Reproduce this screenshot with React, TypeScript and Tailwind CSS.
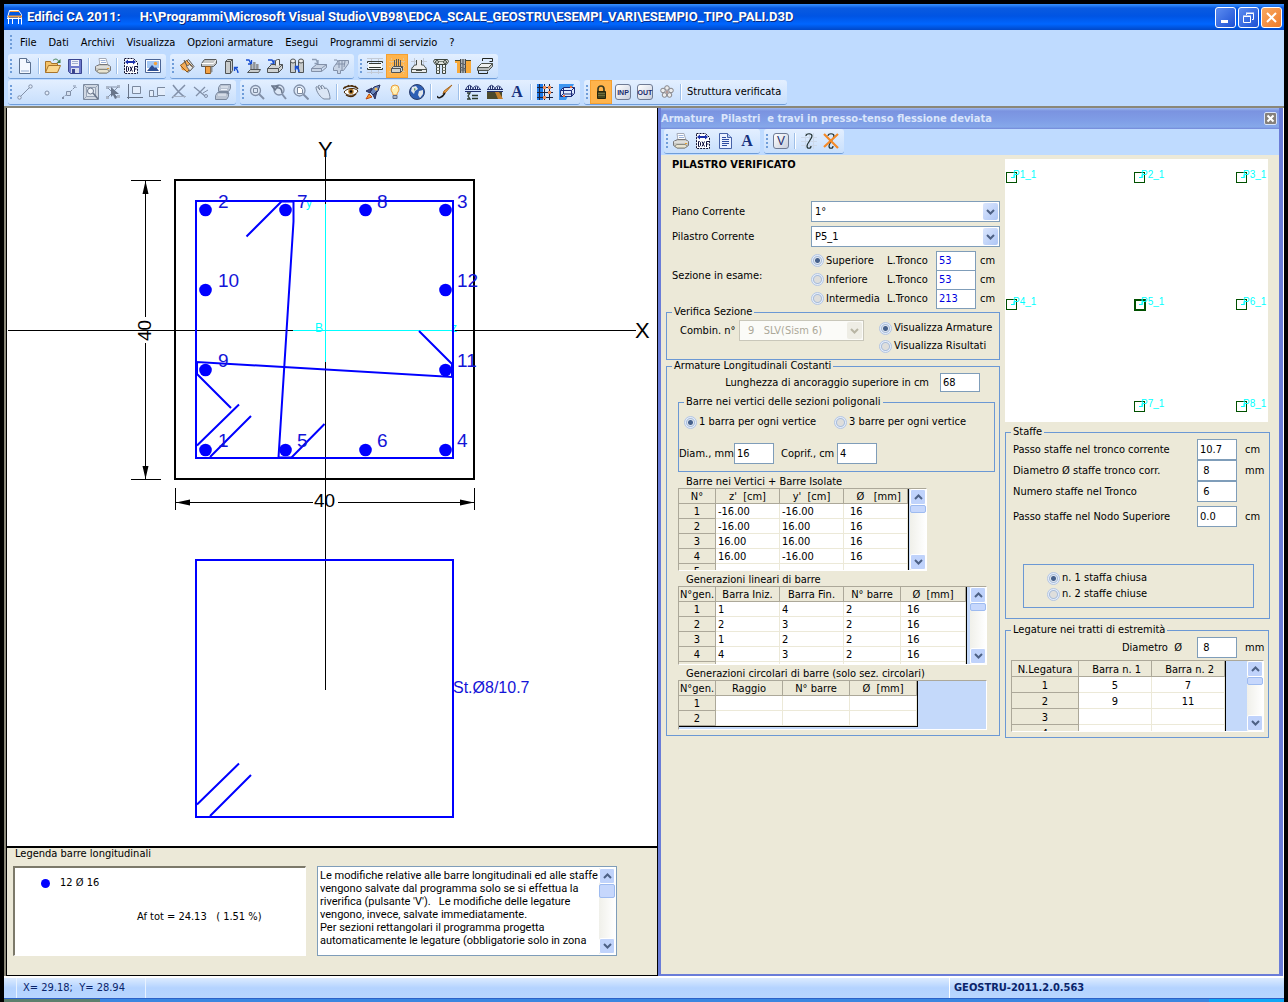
import type { ReactNode } from 'react';

const UI_FONT = "font-['DejaVu_Sans_Condensed','DejaVu_Sans',sans-serif]";

/* ---------- Icons (16x16 grid) ---------- */

const ICONS: Record<string, ReactNode> = {
  newFile: (
    <>
      <path d="M2.500.5h7l4 4v11h-11z" fill="#f4f8ff" stroke="#5b708f" />
      <path d="M9.500.5v4h4" fill="#cfdcf0" stroke="#5b708f" />
      <path d="M4 12h8v2H4z" fill="#c4d2e8" />
    </>
  ),
  open: (
    <>
      <path d="M.5 14.500v-11h5l1 2h6v3" fill="#f4c36a" stroke="#a8742a" />
      <path d="M.5 14.500l3-7h12l-3 7z" fill="#fbd88f" stroke="#a8742a" />
      <path d="M8 2.500c2-2 4-2 6 1" fill="none" stroke="#3f7f4f" />
      <path d="M15.500 1v4h-4z" fill="#3f7f4f" />
    </>
  ),
  save: (
    <>
      <path d="M1.500 1.500h13v14h-11l-2-2z" fill="#6d79cc" stroke="#3a4590" />
      <path d="M4 2h8v6H4z" fill="#eef1fa" />
      <path d="M5 3.500h6M5 5.500h6" stroke="#a0aed0" />
      <path d="M4 10h8v5H4z" fill="#d7def0" />
      <path d="M5 11h3v4H5z" fill="#3a4590" />
    </>
  ),
  print: (
    <>
      <path d="M4 .5h7l2 7h-8z" fill="#fff" stroke="#a4aab8" />
      <path d="M5.500 2.500h5M6 4.500h5" stroke="#9ab0d8" />
      <path d="M.5 8.500l4-2h8l3 2v4l-4 2.500h-7l-4-2.500z" fill="#c9c9c4" stroke="#77777a" />
      <path d="M1 9h14" stroke="#f4f4f2" />
      <path d="M3.500 11.500h9l1.500 2-2 1.500H4L2 13.500z" fill="#e9e4d0" stroke="#8a8a80" />
      <path d="M12 10h2v1h-2z" fill="#e8a030" />
    </>
  ),
  dxf: (
    <>
      <path d="M1.500.5h9l4 4v11h-13z" fill="#fff" stroke="#101030" strokeDasharray="2 1" />
      <path d="M2 4l3-2.500V3h5V1.500L13 4l-3 2.500V5H5v1.500z" fill="#1a2ea8" />
      <path
        d="M3.500 8.500v5h1l1-1v-3l-1-1zM7 8.500l2.500 5M9.500 8.500l-2.500 5M11.500 14V8.500h3M11.500 11h2"
        fill="none"
        stroke="#10103c"
      />
    </>
  ),
  image: (
    <>
      <path d="M.5 1.500h15v13H.5z" fill="#fff" stroke="#4b6596" />
      <path d="M2 3h12v7H2z" fill="#a4c8f4" />
      <circle cx="10.500" cy="5.500" r="1.700" fill="#f5a23a" />
      <path d="M2 13l5-6 3 3 1-1 3 4z" fill="#2c4f94" />
    </>
  ),
  bucket: (
    <>
      <path d="M1 6l4 4 3 3-5-1z" fill="#f29a34" />
      <path d="M4.500 5.500l5-4 5.500 7-6 6z" fill="#d9dbdc" stroke="#5c5c5c" />
      <path d="M1.500 7.500l6-5 6 6-5.500 5.500z" fill="#f4ad58" stroke="#8a5a20" />
      <path d="M7.500 8.500l3-2 3.500 3-3 3.500z" fill="#e6e6e6" stroke="#666" />
      <path d="M5 2l3 6" stroke="#4b4b4b" fill="none" />
    </>
  ),
  beamT: (
    <>
      <path d="M.5 5.500l3-4h12v4l-3 3h-12z" fill="#c4c6c6" stroke="#55585a" />
      <path d="M4.500 8.500h5v7h-5z" fill="#f3a144" stroke="#8a5418" />
      <path d="M9.500 8.500h2v5l-2 2z" fill="#8a8d90" />
      <path d="M.5 5.500h12l3-4" stroke="#fff" fill="none" />
    </>
  ),
  column: (
    <>
      <path d="M2.500 3.500l2-2h5v11l-2 3h-5z" fill="#c9cccc" stroke="#505456" />
      <path d="M7.500 15v-11.500l2-2M2.500 3.500h5" stroke="#505456" fill="none" />
      <path d="M15 15c0-3-1-4-3-5M11.500 13V9.500H15" stroke="#1a4fd0" strokeWidth="1.300" fill="none" />
    </>
  ),
  pileUp: (
    <>
      <path d="M1 2h3l2 4M3 6h3.500V2" stroke="#1a4fd0" strokeWidth="1.300" fill="none" />
      <path d="M6.500 6v6M9.500 4v8M12.500 6v6" stroke="#4a4d50" strokeWidth="2" />
      <path d="M7 6v6M10 4v8M13 6v6" stroke="#d8dada" />
      <path d="M2.500 14.500l3-3h10l-2 3z" fill="#c9cccc" stroke="#505456" />
    </>
  ),
  slabUp: (
    <>
      <path d="M1 2h4l2 4M3.500 6H7V2" stroke="#1a4fd0" strokeWidth="1.300" fill="none" />
      <path d="M.5 10.500l4-4h11v4l-4 4H.5z" fill="#d0d3d3" stroke="#505456" />
      <path d="M.5 10.500h11l4-4M11.500 10.500v4" fill="none" stroke="#505456" />
      <path d="M8.500 7.500v-5l2-1h2v6" fill="#eceeee" stroke="#505456" />
    </>
  ),
  piles: (
    <>
      <path d="M1.500 3.500h5v11h-5zM9.500 3.500h5v11h-5z" fill="#c8cbcb" stroke="#505456" />
      <ellipse cx="4" cy="3" rx="2.500" ry="2" fill="#eee" stroke="#505456" />
      <ellipse cx="12" cy="3" rx="2.500" ry="2" fill="#eee" stroke="#505456" />
      <path d="M10 14c0-3-1-4-3-5M6.500 12V8.500H10" stroke="#1a4fd0" strokeWidth="1.500" fill="none" />
    </>
  ),
  slabOff: (
    <>
      <path d="M1 1.500h4l2 4M3.500 5.500H7V2" stroke="#8c9cb4" strokeWidth="1.300" fill="none" />
      <path d="M.5 10.500l5-4h10l-5 4zM.5 10.500v3h10v-3M10.500 13.500l5-4v-3" fill="#c7d3e4" stroke="#8290a8" />
    </>
  ),
  stairOff: (
    <>
      <path d="M.5 9.500l5-7h10v3l-5 7h-3v3h-3v-3h-4z" fill="#c7d3e4" stroke="#8290a8" />
      <path d="M3 6h9M6 3v7M9 3v9M12 3l-1 6M1 2h3l1 2" stroke="#8290a8" fill="none" />
    </>
  ),
  beamGrid: (
    <>
      <path d="M0 .5h16M0 7.500h16M0 14.500h16M4.500 0v16M11.500 0v16" stroke="#c2cad6" />
      <path d="M1 5h14v6H1z" fill="#f7f9f7" />
      <path d="M.5 5v-1.500h15V5M.5 10v1.500h15V10M2 5.500h12M2 9.500h12" fill="none" stroke="#343a34" />
    </>
  ),
  pillarGrid: (
    <>
      <path d="M0 3.500h16M0 8.500h16M2.500 0v16M14.500 0v16M0 13.500h16" stroke="#e4c494" strokeDasharray="2 1" />
      <path d="M5.500 2v7M7.500 1v8M9.500 1v8M11.500 2v7" stroke="#55585a" />
      <path d="M2.500 10.500l2-2h9v4l-2 2h-9z" fill="#d0d3d3" stroke="#505456" />
      <path d="M2.500 10.500h9l2-2M11.500 10.500v4" stroke="#505456" fill="none" />
    </>
  ),
  plinth: (
    <>
      <path d="M0 3.500h16M0 9.500h16M3.500 0v13M12.500 0v13" stroke="#c2cad6" />
      <path d="M5.500 2v5h-2l-3 4v3.500h15V11l-3-4h-2V2" fill="#eceeee" stroke="#4c524c" />
      <path d="M1 11.500h14M5 12.500h6" stroke="#4c524c" />
    </>
  ),
  pilePair: (
    <>
      <path d="M1.500 1.500h13l1 2-2 3h-11l-2-3z" fill="#dfe3dd" stroke="#3c443c" />
      <path d="M3.500 7v8.500h3V7M9.500 7v8.500h3V7" fill="#f2f4f2" stroke="#3c443c" />
      <circle cx="4" cy="4" r="1.500" fill="none" stroke="#3c443c" />
      <circle cx="12" cy="4" r="1.500" fill="none" stroke="#3c443c" />
      <path d="M3.500 9.500h3M3.500 12.500h3M9.500 9.500h3M9.500 12.500h3M6 3.500h4" stroke="#7b847b" />
    </>
  ),
  pileSoil: (
    <>
      <path d="M0 2h5v13H2V5H0zM11 3h5v12h-5z" fill="#f8a938" />
      <path d="M0 2.500h16" stroke="#4c4a2c" />
      <path d="M5 1h6v14H5z" fill="#aeb3b6" />
      <path d="M5.500 1v14M8 1v14M10.500 1v14" stroke="#44484a" />
      <path d="M5 5l6 2M5 9l6 2M5 12h6" stroke="#5b6064" />
    </>
  ),
  stirrups: (
    <>
      <path d="M5.500 3V.500h10v3h-3M1.500 12.500v3h9v-2" fill="none" stroke="#222622" />
      <path d="M.5 9.500l4-4h11l-4 4z" fill="#eef0f0" stroke="#4c524c" />
      <path d="M.5 9.500v3h11l4-4v-3l-4 4z" fill="#b8bcbc" stroke="#4c524c" />
    </>
  ),
  segment: (
    <>
      <path d="M3 13L13 3" stroke="#8290a8" />
      <circle cx="2.500" cy="13.500" r="1.700" fill="#e3edfb" stroke="#8290a8" />
      <circle cx="13.500" cy="2.500" r="1.700" fill="#e3edfb" stroke="#8290a8" />
    </>
  ),
  node: <circle cx="8" cy="9" r="2" fill="#e3edfb" stroke="#8290a8" />,
  polyNode: (
    <>
      <path d="M1 14l4-3M9 8l5-5M12 2h3v2" stroke="#8290a8" strokeDasharray="3 1" fill="none" />
      <path d="M5.500 7.500h4v4h-4z" fill="#d3dfef" stroke="#8290a8" />
      <path d="M1 13h2v2H1z" fill="#8290a8" />
    </>
  ),
  frameZoom: (
    <>
      <path d="M.5.5h15v15H.5z" fill="#cfd7e2" stroke="#7b899e" />
      <path d="M1 1l14 14M15 1L1 15" stroke="#98a4b6" />
      <path d="M3.500 3.500h9v9h-9z" fill="#dfe6ee" stroke="#98a4b6" />
      <circle cx="7.500" cy="7" r="3" fill="#eef3fa" stroke="#68758a" />
      <path d="M10 9l5 6" stroke="#68758a" strokeWidth="1.500" />
    </>
  ),
  pick: (
    <>
      <path d="M1 2h3v3H1zM12 1h3v3h-3zM1 12h3v3H1zM12 11h3v3h-3z" fill="#aab6c8" />
      <path d="M3 4l9 9M13 3L3 13M4 3h8" stroke="#8290a8" />
      <path d="M6 3v10l2-2 2 4 2-1-2-4h4z" fill="#68758a" />
    </>
  ),
  dimBox: (
    <>
      <path d="M1.500 0v15M0 13.500h16" stroke="#68758a" />
      <path d="M5.500 2.500h8v7h-8z" fill="#e3edfb" stroke="#7b899e" />
    </>
  ),
  dimSide: (
    <>
      <path d="M.5 12.500v-6h4v6zM16 3.500H8.500v8H16" fill="#e3edfb" stroke="#7b899e" />
      <path d="M0 12.500h9" stroke="#7b899e" />
    </>
  ),
  cutA: (
    <>
      <path d="M2 1c3 4 8 10 12 12M14 1C10 5 5 10 1 14" stroke="#8290a8" strokeWidth="1.500" fill="none" />
      <path d="M2 12.500h13" stroke="#a5b1c4" />
    </>
  ),
  cutB: (
    <>
      <path d="M1 3l11 9M12 3L3 12" stroke="#8290a8" strokeWidth="1.300" />
      <circle cx="13" cy="12" r="1.500" fill="none" stroke="#8290a8" />
      <path d="M10 9l5-3" stroke="#8290a8" />
    </>
  ),
  layersOff: (
    <>
      <path d="M3.500 3.500l2-3h10v4l-2 3h-10zM.5 11.500l2-3h11v4l-2 3H.5z" fill="#b9c3d2" stroke="#7b899e" />
      <path d="M6 3h7M6 5.500h6M3 11h8" stroke="#eef3fa" />
      <path d="M11 8l3 2" stroke="#7b899e" strokeWidth="2" />
    </>
  ),
  zoomWin: (
    <>
      <circle cx="6.500" cy="6.500" r="5" fill="#dbe6f5" stroke="#8290a8" strokeWidth="1.300" />
      <path d="M4.500 4.500h4v4h-4z" fill="none" stroke="#7b899e" />
      <path d="M10 10l5 5" stroke="#8290a8" strokeWidth="2" />
    </>
  ),
  zoomBack: (
    <>
      <circle cx="8" cy="6" r="5" fill="#dbe6f5" stroke="#8290a8" strokeWidth="1.300" />
      <path d="M1 2h6L4 6zM5 4c4-1 6 1 6 5" fill="none" stroke="#68758a" strokeWidth="1.500" />
      <path d="M11 10l4 5" stroke="#8290a8" strokeWidth="2" />
    </>
  ),
  zoomPage: (
    <>
      <circle cx="6.500" cy="6.500" r="5.500" fill="#dbe6f5" stroke="#8290a8" strokeWidth="1.300" />
      <path d="M4.500 3.500h3l2 2v4h-5z" fill="#fff" stroke="#7b899e" />
      <path d="M10.500 10.500l5 5" stroke="#8290a8" strokeWidth="2" />
    </>
  ),
  hand: (
    <path
      d="M1 3c1-1 2 0 3 2l1 1-2-4c1-1 2-1 3 1l1 2-1-3c1-1 2-1 3 1l1 2c0-2 2-1 3 1 1 3 2 5 2 9H9C6 14 1 8 1 3z"
      fill="#dbe6f5"
      stroke="#7b899e"
    />
  ),
  eye: (
    <>
      <path d="M1 8c3-4 11-5 14-1-2 5-11 6-14 1z" fill="#fff" stroke="#4a2a08" />
      <circle cx="8" cy="7.500" r="2.700" fill="#b07828" />
      <circle cx="8" cy="7.500" r="1.300" fill="#000" />
      <path d="M0 5c3-4 12-4 15 0M1 3l2 1M5 1l1 2M9 1v1M13 2l-1 1M3 11c3 2 7 2 10-1" stroke="#4a2a08" fill="none" strokeWidth="1.300" />
    </>
  ),
  rocket: (
    <>
      <path d="M15 1L9 3 5 8l3 3 5-4z" fill="#6a86bc" stroke="#28305c" />
      <path d="M1 7l6-3-2 5zM10 15l-2-4 4-4z" fill="#3c4a80" stroke="#28305c" />
      <path d="M1 15l3-5 3 3z" fill="#f8a030" stroke="#c04a10" />
      <circle cx="11" cy="5" r="1.500" fill="#f5c05a" />
    </>
  ),
  bulb: (
    <>
      <path d="M4 5a4 4 0 0 1 8 0c0 3-2 3-2 6H6c0-3-2-3-2-6z" fill="#fff0b4" stroke="#e89c3c" />
      <path d="M6 11.500h4v3H6z" fill="#a7b3c8" stroke="#5b6a88" />
      <path d="M6 5l2-2" stroke="#fff" />
    </>
  ),
  globe: (
    <>
      <circle cx="8" cy="8" r="7.500" fill="#2e5fb4" stroke="#2b3d6c" />
      <path d="M3 3l4-1 2 3-3 2-1 3-3-3zM10 7l4-1v4l-3 4-2-3z" fill="#e2e6ea" />
      <path d="M5 4l2 1-2 2z" fill="#5f9e6a" />
    </>
  ),
  brush: (
    <>
      <path d="M15 1L8 9l-2 1 1-3z" fill="#f2a54a" stroke="#a8661c" />
      <path d="M0 12c1 3 5 2 8-3" stroke="#1c1c1c" strokeWidth="1.500" fill="none" />
    </>
  ),
  bridgeList: (
    <>
      <path d="M0 5.500h16M1 5c2-5 5-5 7 0 1-4 5-4 7 0M3.500 2v3M5.500 2v3M10.500 3v2M12.500 3v2" stroke="#22306c" fill="none" />
      <path d="M2 9h3l-2 3 2 3H2M7 11.500h6M7 14.500h6" stroke="#2c3a2c" fill="none" strokeWidth="1.300" />
      <path d="M0 7.500h16" stroke="#22306c" />
    </>
  ),
  bridgeSoil: (
    <>
      <path d="M0 5.500h16M1 5c2-5 5-5 7 0 1-4 5-4 7 0M3.500 2v3M5.500 2v3M10.500 3v2M12.500 3v2" stroke="#22306c" fill="none" />
      <path d="M0 8h15v7H0z" fill="#4c4a2c" />
      <path d="M8 8h4l4 7h-5z" fill="#c5802c" />
      <path d="M0 7.500h16" stroke="#22306c" />
    </>
  ),
  plan: (
    <>
      <path d="M0 0h6v16H0z" fill="#1d7ae8" />
      <path d="M0 3.500h16M0 8.500h16M0 13.500h16M2.500 0v16M7.500 0v16M12.500 0v16" stroke="#1c2440" />
      <path d="M6 2h3v3H6zM11 2h3v3h-3zM6 12h3v3H6zM11 7h3v3h-3z" fill="#f0905a" />
    </>
  ),
  box3d: (
    <>
      <path d="M0 0h15l-8 16H0z" fill="#3d96f0" />
      <path d="M1.500 6.500l3-3h11v6l-3 3h-11zM1.500 6.500h11v6M12.500 6.500l3-3" fill="#dfeaff" stroke="#1c2c78" />
      <path d="M4.500 4v6h10M4.500 9.500l-3 3" fill="none" stroke="#1c2c78" />
      <path d="M11 2h2v2h-2zM4 11h2v2H4z" fill="#f0703a" />
    </>
  ),
  lock: (
    <>
      <path d="M5 8V5a3 3 0 0 1 6 0v3" fill="none" stroke="#3a3a20" strokeWidth="1.700" />
      <path d="M4.500 7.500h8v7h-8z" fill="#44441e" stroke="#24240c" />
      <path d="M5 9.500h7M5 11.500h7" stroke="#6c6c3a" />
    </>
  ),
  flower: (
    <>
      <g fill="#ececec" stroke="#85858a">
        <circle cx="8" cy="4" r="2.300" />
        <circle cx="12" cy="6.500" r="2.300" />
        <circle cx="4" cy="6.500" r="2.300" />
        <circle cx="10.500" cy="11" r="2.300" />
        <circle cx="5.500" cy="11" r="2.300" />
      </g>
      <circle cx="8" cy="8" r="1.500" fill="#b49a94" />
    </>
  ),
  doc: (
    <>
      <path d="M2.500.5h8l4 4v11h-12z" fill="#eaf1ff" stroke="#4662a8" />
      <path d="M5 4.500h4M5 6.500h7M5 8.500h7M5 10.500h7M5 12.500h5" stroke="#2c4ba0" />
      <path d="M10.500.5v4h4" fill="#b9cdf2" stroke="#4662a8" />
    </>
  ),
  hook: (
    <>
      <path d="M0 4.500h16M0 8.500h16M0 12.500h16M4.500 0v16M8.500 0v16M12.500 0v16" stroke="#cdd9ea" />
      <path d="M5 3c0-3 6-3 6 0s-5 7-5 10c0 3 4 3 4 0" fill="none" stroke="#203030" strokeWidth="1.200" />
    </>
  ),
  hookDelete: (
    <>
      <path d="M5 3c0-3 6-3 6 0s-5 7-5 10c0 3 4 3 4 0" fill="none" stroke="#203030" strokeWidth="1.200" />
      <path d="M1 1l14 14M15 1L1 14" stroke="#f58a28" strokeWidth="2.200" />
    </>
  ),
};

function Icon({ name }: { name: string }) {
  return (
    <svg viewBox="0 0 16 16" className="w-4 h-4" aria-hidden="true">
      {ICONS[name]}
    </svg>
  );
}

function Chip({ children }: { children: string }) {
  return (
    <span
      className={`flex w-4 h-4 items-center justify-center rounded-[3px] border border-[#6f7b94] bg-gradient-to-br from-white to-[#c9cfdd] leading-none text-[#1a2a6c] font-['Liberation_Sans',sans-serif] ${
        children.length > 1 ? 'text-[7px] font-bold' : 'text-xs'
      }`}
    >
      {children}
    </span>
  );
}

/* ---------- Toolbars ---------- */

type Tool = { name: string; label: string; active?: boolean } | '|';

const FILE_TOOLS: Tool[] = [
  { name: 'newFile', label: 'Nuovo' }, '|',
  { name: 'open', label: 'Apri' },
  { name: 'save', label: 'Salva' }, '|',
  { name: 'print', label: 'Stampa' }, '|',
  { name: 'dxf', label: 'DXF' },
  { name: 'image', label: 'Immagine' },
];

const MODEL_TOOLS: Tool[] = [
  { name: 'bucket', label: 'Materiali' },
  { name: 'beamT', label: 'Travi' },
  { name: 'column', label: 'Pilastri' },
  { name: 'pileUp', label: 'Pali' },
  { name: 'slabUp', label: 'Plinti' },
  { name: 'piles', label: 'Pali di fondazione' },
  { name: 'slabOff', label: 'Piastre' },
  { name: 'stairOff', label: 'Scale' },
];

const REBAR_TOOLS: Tool[] = [
  { name: 'beamGrid', label: 'Armature travi' },
  { name: 'pillarGrid', label: 'Armature pilastri', active: true },
  { name: 'plinth', label: 'Armature plinti' },
  { name: 'pilePair', label: 'Plinti su pali' },
  { name: 'pileSoil', label: 'Armature pali' },
  { name: 'stirrups', label: 'Staffe' },
];

const EDIT_TOOLS: Tool[] = [
  { name: 'segment', label: 'Segmento' },
  { name: 'node', label: 'Nodo' },
  { name: 'polyNode', label: 'Dividi' },
  { name: 'frameZoom', label: 'Cerca' },
  { name: 'pick', label: 'Seleziona' },
  { name: 'dimBox', label: 'Filo fisso' },
  { name: 'dimSide', label: 'Allinea' },
  { name: 'cutA', label: 'Taglia' },
  { name: 'cutB', label: 'Elimina' },
  { name: 'layersOff', label: 'Copia piano' },
];

const VIEW_TOOLS: Tool[] = [
  { name: 'zoomWin', label: 'Zoom finestra' },
  { name: 'zoomBack', label: 'Zoom precedente' },
  { name: 'zoomPage', label: 'Zoom tutto' },
  { name: 'hand', label: 'Sposta' }, '|',
  { name: 'eye', label: 'Vista' },
  { name: 'rocket', label: 'Calcola' },
  { name: 'bulb', label: 'Suggerimenti' },
  { name: 'globe', label: 'Internet' }, '|',
  { name: 'brush', label: 'Colori' }, '|',
  { name: 'bridgeList', label: 'Carichi' },
  { name: 'bridgeSoil', label: 'Terreno' },
  { name: 'letter', label: 'Carattere' }, '|',
  { name: 'plan', label: 'Pianta' },
  { name: 'box3d', label: 'Vista 3D' },
];

const STATE_TOOLS: Tool[] = [
  { name: 'lock', label: 'Blocca', active: true },
  { name: 'INP', label: 'Input' },
  { name: 'OUT', label: 'Output' },
  { name: 'flower', label: 'Opzioni' }, '|',
];

const PANEL_TOOLS: Tool[] = [
  { name: 'print', label: 'Stampa sezione' },
  { name: 'dxf', label: 'Esporta DXF' },
  { name: 'doc', label: 'Relazione' },
  { name: 'letter', label: 'Carattere disegno' },
];

const CHECK_TOOLS: Tool[] = [
  { name: 'V', label: 'Riverifica' }, '|',
  { name: 'hook', label: 'Aggiungi legatura' },
  { name: 'hookDelete', label: 'Elimina legatura' },
];

function Grip() {
  return (
    <span className="flex w-1.5 flex-col items-center gap-0.5" aria-hidden="true">
      {[0, 1, 2, 3].map((i) => (
        <span key={i} className="h-0.5 w-0.5 bg-[#6f9dd9]" />
      ))}
    </span>
  );
}

function ToolGlyph({ name }: { name: string }) {
  if (name === 'letter') {
    return <span className="text-base leading-4 font-bold text-[#16307c] font-['Liberation_Serif',serif]">A</span>;
  }
  if (name === 'V' || name === 'INP' || name === 'OUT') {
    return <Chip>{name}</Chip>;
  }
  return <Icon name={name} />;
}

function Band({ tools, children }: { tools: Tool[]; children?: ReactNode }) {
  return (
    <div className="flex items-center rounded-[3px] border-b border-[#6f9dd9] bg-gradient-to-b from-[#e3efff] to-[#c8dffc] pr-0.5">
      <Grip />
      {tools.map((t, i) =>
        t === '|' ? (
          <span key={i} className="mx-0.5 h-4 w-0.5 border-l border-[#9ebfe8] bg-white" />
        ) : (
          <button
            key={i}
            type="button"
            aria-label={t.label}
            className={`flex h-6 w-[22px] items-center justify-center ${
              t.active ? 'border border-[#f5a030] bg-[#ffb44c]' : ''
            }`}
          >
            <ToolGlyph name={t.name} />
          </button>
        ),
      )}
      {children}
    </div>
  );
}

/* ---------- Controls ---------- */

function Chevron({ up, muted }: { up?: boolean; muted?: boolean }) {
  return (
    <svg viewBox="0 0 9 6" className="h-1.5 w-[9px]" aria-hidden="true">
      <path
        d={up ? 'M1 5l3.500-3.500L8 5' : 'M1 1l3.500 3.500L8 1'}
        fill="none"
        stroke={muted ? '#b8b5a4' : '#4d6185'}
        strokeWidth="2"
      />
    </svg>
  );
}

function Radio({ name, label, checked }: { name: string; label: string; checked?: boolean }) {
  return (
    <label className="flex items-center gap-0.5 whitespace-nowrap">
      <input
        type="radio"
        name={name}
        defaultChecked={checked}
        className="h-[13px] w-[13px] shrink-0 appearance-none rounded-full border border-[#b4c6e4] bg-[radial-gradient(circle,#dededc_0_3px,#a9bcd8_4px,#e4edfa_5px)] checked:bg-[radial-gradient(circle,#46618c_0_2px,#e0e6ee_3px,#a9bcd8_4px,#e4edfa_5px)]"
      />
      {label}
    </label>
  );
}

function Select({ id, value, disabled }: { id: string; value: string; disabled?: boolean }) {
  return (
    <div className="relative flex-1">
      <select
        id={id}
        disabled={disabled}
        className={`h-[21px] w-full appearance-none border opacity-100 ${
          disabled ? 'border-[#c9c7ba] bg-[#fbfbf8] pl-2 text-[#aca899]' : 'border-[#7f9db9] bg-white pl-[3px] text-black'
        }`}
      >
        <option>{value}</option>
      </select>
      <span
        className={`pointer-events-none absolute top-0.5 right-0.5 flex h-[17px] w-[15px] items-center justify-center rounded-[2px] ${
          disabled ? 'bg-[#eeede5]' : 'bg-gradient-to-br from-[#dbe6fd] to-[#aec6f5]'
        }`}
      >
        <Chevron muted={disabled} />
      </span>
    </div>
  );
}

function Field({ id, value, className = '' }: { id: string; value: string; className?: string }) {
  return (
    <input
      id={id}
      defaultValue={value}
      className={`w-10 shrink-0 border border-[#7f9db9] bg-white pl-0.5 ${className}`}
    />
  );
}

function Group({ title, className = '', children }: { title: string; className?: string; children: ReactNode }) {
  return (
    <fieldset className={`min-w-0 border border-[#6b98d4] ${className}`}>
      <legend className="ml-[5px] h-2 px-0.5 leading-2">{title}</legend>
      {children}
    </fieldset>
  );
}

function ScrollBar({ thumb = 'h-2' }: { thumb?: string }) {
  return (
    <div className="flex w-4 shrink-0 flex-col bg-gradient-to-r from-[#f0f0ea] to-white" aria-hidden="true">
      <span className="flex h-4 shrink-0 items-center justify-center rounded-[2px] border border-white bg-[#c0d3fb]">
        <Chevron up />
      </span>
      <span className={`shrink-0 rounded-[2px] border border-[#9ebbf0] bg-[#c6d7fc] ${thumb}`} />
      <span className="flex-1" />
      <span className="flex h-4 shrink-0 items-center justify-center rounded-[2px] border border-white bg-[#c0d3fb]">
        <Chevron />
      </span>
    </div>
  );
}

type GridProps = {
  label: string;
  head: string[];
  rows: string[][];
  cols: number[];
  className: string;
  rowClass?: string;
  cellClass?: string;
  scroll?: boolean;
  closed?: boolean;
};

function DataGrid({ label, head, rows, cols, className, rowClass = 'h-[15px]', cellClass = 'pl-0.5', scroll, closed }: GridProps) {
  const width = cols.reduce((a, b) => a + b, 0);
  const headCell = 'border-r border-b border-[#aca899] bg-[#ece9d8] p-0 pt-px font-normal';
  return (
    <div className={`flex justify-between overflow-hidden border border-t-[#aca899] border-l-[#aca899] border-r-white border-b-white bg-[#c4d9fa] ${className}`}>
      <div className={closed ? 'self-start border-r border-b border-black' : 'border-r border-black'}>
        <table aria-label={label} className="table-fixed border-separate border-spacing-0 bg-white leading-[13px]" style={{ width }}>
          <colgroup>
            {cols.map((w, i) => (
              <col key={i} style={{ width: w }} />
            ))}
          </colgroup>
          <thead>
            <tr className={rowClass}>
              {head.map((h) => (
                <th key={h} scope="col" className={headCell}>
                  <div className="flex justify-center overflow-hidden whitespace-pre">{h}</div>
                </th>
              ))}
            </tr>
          </thead>
          <tbody>
            {rows.map((r) => (
              <tr key={r[0]} className={rowClass}>
                <th scope="row" className={headCell}>{r[0]}</th>
                {r.slice(1).map((c, j) => (
                  <td key={j} className={`border-r border-b border-[#ece9d8] p-0 pt-px ${cellClass}`}>{c}</td>
                ))}
              </tr>
            ))}
          </tbody>
        </table>
      </div>
      {scroll && <ScrollBar />}
    </div>
  );
}

/* ---------- Section drawing ---------- */

const BARS = [
  { n: 1, x: 205, y: 450, tx: 218, ty: 447 },
  { n: 2, x: 205, y: 210, tx: 218, ty: 208 },
  { n: 3, x: 445, y: 210, tx: 457, ty: 208 },
  { n: 4, x: 445, y: 450, tx: 457, ty: 447 },
  { n: 5, x: 285, y: 450, tx: 297, ty: 447 },
  { n: 6, x: 365, y: 450, tx: 377, ty: 447 },
  { n: 7, x: 285, y: 210, tx: 297, ty: 208 },
  { n: 8, x: 365, y: 210, tx: 377, ty: 208 },
  { n: 9, x: 205, y: 370, tx: 218, ty: 367 },
  { n: 10, x: 205, y: 290, tx: 218, ty: 287 },
  { n: 11, x: 445, y: 370, tx: 457, ty: 367 },
  { n: 12, x: 445, y: 290, tx: 457, ty: 287 },
];

function SectionDrawing() {
  return (
    <svg
      viewBox="7 108 650 738"
      role="img"
      aria-label="Sezione pilastro"
      className="block w-full bg-white font-['Liberation_Sans',sans-serif]"
    >
      {/* axes */}
      <g stroke="#000" shapeRendering="crispEdges">
        <path d="M8 330.500h285M455 330.500h181M325.500 157v47M325.500 362v328" />
        <path d="M131 180.500h30M131 479.500h30M145.500 181v136M145.500 343v136" />
        <path d="M175.500 488v22M474.500 488v22M176 502.500h137M338 502.500h136" />
        <path d="M175 180h299v299H175z" fill="none" strokeWidth="2" />
      </g>
      <path d="M145.500 181l3 13h-6zM145.500 479l3-13h-6zM176 502.500l14-3v6zM474 502.500l-14-3v6z" />

      {/* local reference */}
      <path d="M293 330.500h162M325.500 204v158" stroke="#0ff" shapeRendering="crispEdges" />
      <g fill="#0ff" fontSize="12">
        <text x="306" y="207">y</text>
        <text x="315" y="332">B</text>
        <text x="451" y="332">z</text>
      </g>

      {/* stirrups and ties */}
      <g stroke="#00f" strokeWidth="2" fill="none">
        <path d="M196 201h257v257H196z" shapeRendering="crispEdges" />
        <path d="M246.500 236.500l35-35h12v20l-15 236h13l33-33.500" />
        <path d="M231 408l-34-34v-12l255 15v-13l-33-33" />
        <path d="M197 445.500l42-41M210 457l41-41" />
        <path d="M196 560h257v257H196z" shapeRendering="crispEdges" />
        <path d="M197 804.500l42-41M210 816l41-41" />
      </g>

      <g fill="#00f">
        {BARS.map((b) => (
          <circle key={b.n} cx={b.x + 0.5} cy={b.y} r="6.300" />
        ))}
      </g>
      <g fill="#1414d8" fontSize="19">
        {BARS.map((b) => (
          <text key={b.n} x={b.tx} y={b.ty}>{b.n}</text>
        ))}
      </g>
      <text x="453" y="693" fill="#1414d8" fontSize="16">St.Ø8/10.7</text>

      <g fontSize="22">
        <text x="318" y="157">Y</text>
        <text x="635" y="338">X</text>
      </g>
      <g fontSize="19">
        <text x="314" y="507">40</text>
        <text x="151" y="341" transform="rotate(-90 151 341)">40</text>
      </g>
    </svg>
  );
}

const PILLARS = [
  { id: 'P1_1', x: 6, y: 13 },
  { id: 'P2_1', x: 134, y: 13 },
  { id: 'P3_1', x: 236, y: 13 },
  { id: 'P4_1', x: 6, y: 140 },
  { id: 'P5_1', x: 134, y: 140, current: true },
  { id: 'P6_1', x: 236, y: 140 },
  { id: 'P7_1', x: 134, y: 242 },
  { id: 'P8_1', x: 236, y: 242 },
];

function PillarMap() {
  return (
    <svg
      viewBox="0 0 263 263"
      role="img"
      aria-label="Pianta pilastri"
      className="block w-[263px] bg-white font-['Liberation_Sans',sans-serif]"
    >
      {PILLARS.map((p) => (
        <g key={p.id}>
          <rect
            x={p.x - 4.5}
            y={p.y + 0.5}
            width="10"
            height="10"
            fill="none"
            stroke="#005000"
            strokeWidth={p.current ? 2 : 1}
            shapeRendering="crispEdges"
          />
          <path d={`M${p.x} ${p.y + 5.500}h3v-3`} stroke="#0ff" fill="none" />
          <text x={p.x + 2} y={p.y + 6} fontSize="10" fill="#0ff">{p.id}</text>
        </g>
      ))}
    </svg>
  );
}

/* ---------- Panels ---------- */

const NOTE = [
  'Le modifiche relative alle barre longitudinali ed alle staffe',
  'vengono salvate dal programma solo se si effettua la',
  "riverifica (pulsante 'V').   Le modifiche delle legature",
  'vengono, invece, salvate immediatamente.',
  'Per sezioni rettangolari il programma progetta',
  'automaticamente le legature (obbligatorie solo in zona',
].join('\n');

const SEGMENTS = [
  { id: 'sup', label: 'Superiore', value: '53', checked: true },
  { id: 'inf', label: 'Inferiore', value: '53' },
  { id: 'int', label: 'Intermedia', value: '213' },
];

const STIRRUPS = [
  { id: 'passo', label: 'Passo staffe nel tronco corrente', value: '10.7', unit: 'cm' },
  { id: 'diametro', label: 'Diametro Ø staffe tronco corr.', value: ' 8', unit: 'mm' },
  { id: 'numero', label: 'Numero staffe nel Tronco', value: ' 6', unit: '' },
];

function StirrupRow({ id, label, value, unit }: { id: string; label: string; value: string; unit: string }) {
  return (
    <div className="flex items-center pl-[7px]">
      <label htmlFor={id} className="flex-1 whitespace-nowrap">{label}</label>
      <Field id={id} value={value} className="h-[21px]" />
      <span className="w-8 pl-2">{unit}</span>
    </div>
  );
}

function BarsColumn() {
  return (
    <div className="min-w-0 flex-1">
      <h2 className="pl-1.5 leading-5 font-bold">PILASTRO VERIFICATO</h2>

      <div className="mt-[26px] space-y-1">
        <div className="flex items-center pl-1.5">
          <label htmlFor="piano" className="w-[139px]">Piano Corrente</label>
          <Select id="piano" value="1°" />
        </div>
        <div className="flex items-center pl-1.5">
          <label htmlFor="pilastro" className="w-[139px]">Pilastro Corrente</label>
          <Select id="pilastro" value="P5_1" />
        </div>
        <div className="flex pl-1.5">
          <span className="w-[139px] pt-[18px]">Sezione in esame:</span>
          <div>
            {SEGMENTS.map((s) => (
              <div key={s.id} className="flex h-[19px] items-center">
                <div className="w-[76px]">
                  <Radio name="sezione" label={s.label} checked={s.checked} />
                </div>
                <label htmlFor={s.id} className="w-[49px]">L.Tronco</label>
                <Field id={s.id} value={s.value} className="h-5 text-[#0000e0]" />
                <span className="pl-1">cm</span>
              </div>
            ))}
          </div>
        </div>
      </div>

      <Group title="Verifica Sezione" className="h-[52px]">
        <div className="flex pt-1 pl-[13px]">
          <label htmlFor="combin" className="w-[59px] pt-1">Combin. n°</label>
          <div className="flex w-[125px]">
            <Select id="combin" value={'9\u00a0\u00a0\u00a0SLV(Sism 6)'} disabled />
          </div>
          <div className="space-y-1 pt-px pl-[15px]">
            <Radio name="vista" label="Visualizza Armature" checked />
            <Radio name="vista" label="Visualizza Risultati" />
          </div>
        </div>
      </Group>

      <Group title="Armature Longitudinali Costanti" className="mt-0.5">
        <div className="pr-1 pb-[5px] pl-[11px]">
          <div className="flex items-center justify-end gap-[11px] pt-[3px] pr-[15px]">
            <label htmlFor="ancoraggio">Lunghezza di ancoraggio superiore in cm</label>
            <Field id="ancoraggio" value="68" className="h-[19px]" />
          </div>

          <Group title="Barre nei vertici delle sezioni poligonali" className="mt-1.5 pb-[7px]">
            <div className="flex pt-[9px] pl-[5px]">
              <div className="w-[150px]">
                <Radio name="vertice" label="1 barra per ogni vertice" checked />
              </div>
              <Radio name="vertice" label="3 barre per ogni vertice" />
            </div>
            <div className="mt-3.5 flex items-center">
              <label htmlFor="diam" className="w-[55px] whitespace-nowrap">Diam., mm</label>
              <Field id="diam" value="16" className="h-[21px]" />
              <label htmlFor="coprif" className="w-[63px] pl-[7px] whitespace-nowrap">Coprif., cm</label>
              <Field id="coprif" value="4" className="h-[21px]" />
            </div>
          </Group>

          <div className="mt-1 pl-2 leading-3">Barre nei Vertici + Barre Isolate</div>
          <DataGrid
            label="Barre nei Vertici + Barre Isolate"
            className="h-[83px] w-[249px]"
            cols={[37, 64, 64, 64]}
            head={['N°', "z'  [cm]", "y'  [cm]", '  Ø   [mm]']}
            rows={[
              ['1', '-16.00', '-16.00', '16'],
              ['2', '-16.00', '16.00', '16'],
              ['3', '16.00', '16.00', '16'],
              ['4', '16.00', '-16.00', '16'],
              ['5', '', '', ''],
            ]}
            cellClass="pl-0.5 last:pl-1.5"
            scroll
          />
          <div className="mt-[3px] pl-2 leading-3">Generazioni lineari di barre</div>
          <DataGrid
            label="Generazioni lineari di barre"
            className="mr-2 h-[79px]"
            cols={[37, 64, 64, 57, 65]}
            head={['N°gen.', 'Barra Iniz.', 'Barra Fin.', 'N° barre', 'Ø  [mm]']}
            rows={[
              ['1', '1', '4', '2', '16'],
              ['2', '2', '3', '2', '16'],
              ['3', '1', '2', '2', '16'],
              ['4', '4', '3', '2', '16'],
              ['', '', '', '', ''],
            ]}
            cellClass="pl-0.5 last:pl-1.5"
            scroll
          />
          <div className="mt-[3px] pl-2 leading-3">Generazioni circolari di barre (solo sez. circolari)</div>
          <DataGrid
            label="Generazioni circolari di barre"
            className="mr-2 h-[50px]"
            cols={[37, 67, 67, 67]}
            head={['N°gen.', 'Raggio', 'N° barre', 'Ø  [mm]']}
            rows={[
              ['1', '', '', ''],
              ['2', '', '', ''],
            ]}
            closed
          />
        </div>
      </Group>
    </div>
  );
}

function StirrupsColumn() {
  return (
    <div className="w-[265px] shrink-0 pt-1">
      <PillarMap />

      <Group title="Staffe" className="mt-1.5 pb-2.5">
        <div className="pt-[3px]">
          {STIRRUPS.map((s) => (
            <StirrupRow key={s.id} {...s} />
          ))}
        </div>
        <div className="mt-1">
          <StirrupRow id="passoNodo" label="Passo staffe nel Nodo Superiore" value="0.0" unit="cm" />
        </div>
        <div className="mr-[15px] ml-[17px] mt-[37px] space-y-0.5 border border-[#6b98d4] py-1.5 pl-[23px]">
          <Radio name="staffe" label="n. 1 staffa chiusa" checked />
          <Radio name="staffe" label="n. 2 staffe chiuse" />
        </div>
      </Group>

      <Group title="Legature nei tratti di estremità" className="mt-[7px] mr-px pb-[5px]">
        <div className="flex items-center pt-[3px]">
          <label htmlFor="legDiam" className="flex-1 pr-[15px] text-right whitespace-pre">Diametro  Ø</label>
          <Field id="legDiam" value=" 8" className="h-[21px]" />
          <span className="w-[31px] pl-2">mm</span>
        </div>
        <DataGrid
          label="Legature"
          className="mt-0.5 mr-1 ml-[5px] h-[72px]"
          cols={[67, 73, 73]}
          head={['N.Legatura', ' Barra n. 1', ' Barra n. 2']}
          rows={[
            ['1', '5', '7'],
            ['2', '9', '11'],
            ['3', '', ''],
            ['4', '', ''],
          ]}
          rowClass="h-4"
          cellClass="text-center"
          scroll
        />
      </Group>
    </div>
  );
}

const MENU = ['File', 'Dati', 'Archivi', 'Visualizza', 'Opzioni armature', 'Esegui', 'Programmi di servizio', '?'];

function TitleBar() {
  const box =
    'flex h-[21px] w-[21px] items-center justify-center rounded-[3px] border border-white bg-gradient-to-br';
  return (
    <header className="flex h-[26px] items-center bg-[linear-gradient(#3a93ff_0,#0a5be0_4px,#0054e3_12px,#0066ff_20px,#0048c8_26px)] pr-0.5 pl-[3px]">
      <svg viewBox="0 0 16 16" className="h-4 w-4" aria-hidden="true">
        <path d="M.5 8.500l2-7h9l3 4v10M1.500 15V8M5.500 15V9M11.500 15V8M2.500 2h9" fill="none" stroke="#fff" />
        <path d="M1 7.500h14" stroke="#f39a3c" strokeWidth="2" />
        <path d="M3 2.500h9" stroke="#f39a3c" />
        <path d="M0 9.500h15" stroke="#fff" />
      </svg>
      <h1 className="flex-1 pl-1 text-[13px] font-bold whitespace-pre text-white [text-shadow:1px_1px_0_#0a2a80] font-['Roboto',sans-serif]">
        {'Edifici CA 2011:      H:\\Programmi\\Microsoft Visual Studio\\VB98\\EDCA_SCALE_GEOSTRU\\ESEMPI_VARI\\ESEMPIO_TIPO_PALI.D3D'}
      </h1>
      <div className="flex gap-0.5">
        <button type="button" aria-label="Riduci" className={`${box} from-[#5d8cf0] to-[#1c4fd4]`}>
          <svg viewBox="0 0 15 15" className="h-[15px] w-[15px]"><path d="M3 10h7v3H3z" fill="#fff" /></svg>
        </button>
        <button type="button" aria-label="Ripristina" className={`${box} from-[#5d8cf0] to-[#1c4fd4]`}>
          <svg viewBox="0 0 15 15" className="h-[15px] w-[15px]" fill="none" stroke="#fff">
            <path d="M5.500 5V3.500h7v6H11M5 3h8" />
            <path d="M2.500 6.500h7v6h-7zM2 6h8" />
          </svg>
        </button>
        <button type="button" aria-label="Chiudi" className={`${box} from-[#f8a860] to-[#ee7a26]`}>
          <svg viewBox="0 0 15 15" className="h-[15px] w-[15px]"><path d="M3 3l9 9M12 3l-9 9" stroke="#fff" strokeWidth="2" /></svg>
        </button>
      </div>
    </header>
  );
}

export default function App() {
  return (
    <div className={`flex min-h-screen flex-col bg-black pt-1 text-[11px] leading-3.5 text-black ${UI_FONT}`}>
      <div className="mx-1 flex flex-1 flex-col bg-[#bfdbff]">
        <TitleBar />

        <nav className="flex h-6 items-center gap-3 pl-1">
          <div className="-mr-1.5"><Grip /></div>
          {MENU.map((m) => (
            <button key={m} type="button" className="pt-px whitespace-nowrap">{m}</button>
          ))}
        </nav>
        <div className="flex gap-1 pb-px pl-1">
          <Band tools={FILE_TOOLS} />
          <Band tools={MODEL_TOOLS} />
          <Band tools={REBAR_TOOLS} />
        </div>
        <div className="flex gap-1 pb-px pl-1">
          <Band tools={EDIT_TOOLS} />
          <Band tools={VIEW_TOOLS} />
          <Band tools={STATE_TOOLS}>
            <span className="pr-1 pl-[3px] whitespace-nowrap">Struttura verificata</span>
          </Band>
        </div>

        <main className="flex flex-1 border-t-2 border-l-2 border-[#8a8778]">
          {/* Drawing and legend */}
          <section className="flex min-w-0 flex-1 flex-col border border-t-0 border-black bg-[#ece9d8]">
            <SectionDrawing />
            <div className="flex-1 border-t-2 border-black px-1.5 pb-[18px]">
              <div className="pl-0.5 leading-3">Legenda barre longitudinali</div>
              <div className="mt-1.5 flex h-[90px] gap-[11px]">
                <div className="w-[293px] border-t-2 border-l-2 border-r border-b border-t-[#7c796a] border-l-[#7c796a] border-r-white border-b-white bg-white">
                  <p className="flex items-center gap-2.5 pt-2 pl-[26px]">
                    <span className="h-[9px] w-[9px] rounded-full bg-[#00f]" />
                    12 Ø 16
                  </p>
                  <p className="mt-5 pl-[122px] whitespace-pre">Af tot = 24.13   ( 1.51 %)</p>
                </div>
                <div className="flex w-[300px] border border-[#7f9db9] bg-white p-px">
                  <textarea
                    readOnly
                    aria-label="Note"
                    defaultValue={NOTE}
                    className="min-w-0 flex-1 resize-none overflow-hidden pt-px pl-px leading-[13px] whitespace-pre font-['Roboto',sans-serif]"
                  />
                  <ScrollBar thumb="h-3.5" />
                </div>
              </div>
            </div>
          </section>

          {/* Reinforcement panel */}
          <section className="flex w-[626px] shrink-0 flex-col border-r border-white bg-[#6a7cd8] pr-1 pb-0.5 pl-[3px]">
            <div className="flex h-[21px] items-center justify-between bg-[linear-gradient(#9db8ee_0,#7b93e0_3px,#7f9de6_12px,#86a8ea_19px,#7388d8_21px)] pr-0.5">
              <h2 className="font-bold whitespace-pre text-[#dbe6fb]">
                {'Armature  Pilastri  e travi in presso-tenso flessione deviata'}
              </h2>
              <button type="button" aria-label="Chiudi pannello" className="flex h-[13px] w-[13px] items-center justify-center rounded-[2px] border border-[#d8e4fa] bg-[#85807a]">
                <svg viewBox="0 0 9 9" className="h-[9px] w-[9px]"><path d="M1.500 1.500l6 6M7.500 1.500l-6 6" stroke="#fff" strokeWidth="2" /></svg>
              </button>
            </div>
            <div className="flex gap-1 bg-[#bfdbff] pb-px pl-[3px]">
              <Band tools={PANEL_TOOLS} />
              <Band tools={CHECK_TOOLS} />
            </div>
            <div className="flex flex-1 gap-[5px] bg-[#ece9d8] pr-[9px] pl-[5px]">
              <BarsColumn />
              <StirrupsColumn />
            </div>
          </section>
        </main>

        <footer className="flex h-[22px] items-stretch border-t-2 border-white bg-gradient-to-b from-[#dcebff] via-[#b4d3ff] to-[#b8d6ff] leading-5 text-[#0a246a]">
          <span className="ml-3 w-[130px] border-x border-[#e8f2ff] pl-1.5 whitespace-pre">X= 29.18;  Y= 28.94</span>
          <span className="flex-1" />
          <span className="w-[335px] border-l border-white pl-1 font-bold">GEOSTRU-2011.2.0.563</span>
        </footer>
        <div className="flex h-1 border-t border-[#2c62c8] bg-[#3a86e0]" aria-hidden="true">
          <span className="w-24 bg-[#5d7f6c]" />
          <span className="flex-1" />
          <span className="w-[75px] bg-[#12a6f4]" />
        </div>
      </div>
    </div>
  );
}
